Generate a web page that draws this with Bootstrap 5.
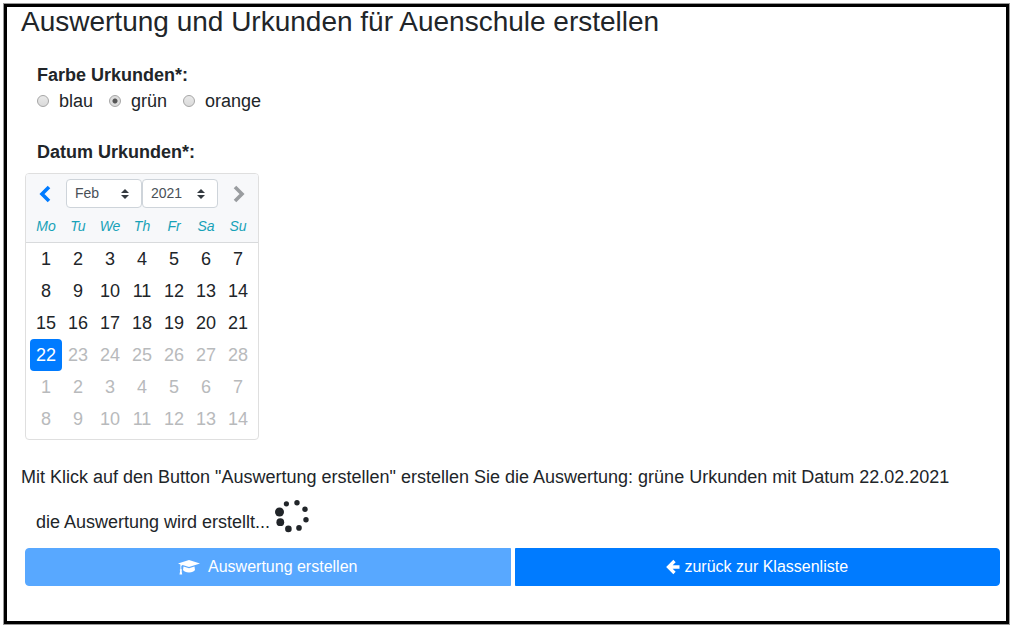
<!DOCTYPE html>
<html lang="de">
<head>
<meta charset="utf-8">
<meta name="viewport" content="width=device-width, initial-scale=1">
<title>Auswertung und Urkunden</title>
<link href="https://cdn.jsdelivr.net/npm/bootstrap@5.3.0/dist/css/bootstrap.min.css" rel="stylesheet">
<style>
body { font: 18px/27px "Liberation Sans", Arial, sans-serif; color: #212529; background: #fff; }
.page-frame { margin: 4px 3px 4px 4px; min-height: calc(100vh - 8px); border: 3px solid #000; outline: 1px solid #999; padding: 0 6px 20px 14px; }
.page-title { font-size: 28px; line-height: 30px; font-weight: 400; margin-bottom: 25px; }
.group-title { font-size: 18px; line-height: 26px; font-weight: 700; }
.date-title { margin-top: 25px; }
.color-choice { gap: 16px; line-height: 26px; }
.color-choice label { gap: 10px; }
.color-choice input { appearance: none; width: 12px; height: 12px; margin: 0; border: 1px solid #a6a6a6; border-radius: 50%; background: linear-gradient(#e9e9e9, #dadada); }
.color-choice input:checked { background: radial-gradient(circle, #555 0 2px, #ddd 3px); }
.picker { width: 234px; border: 1px solid #dfdfdf; border-radius: 4px; overflow: hidden; }
.picker-head { background: #f7f8fa; padding: 5px 4px 2px; }
.picker-nav { width: 32px; height: 29px; color: #007bff; }
.picker-nav:disabled { color: #9a9da0; }
.picker-select { width: 76px; height: 29px; padding: 0 8px; border: 1px solid #ced4da; border-radius: 4px; color: #495057; font-size: 14px; appearance: none; background: #fff url("data:image/svg+xml,%3Csvg xmlns='http://www.w3.org/2000/svg' viewBox='0 0 4 5'%3E%3Cpath fill='%23343a40' d='M2 0L0 2h4zm0 5L0 3h4z'/%3E%3C/svg%3E") no-repeat right 12px center / 8px 10px; }
.picker-table { table-layout: fixed; width: 100%; line-height: 32px; text-align: center; margin-bottom: 4px; }
.picker-table th, .picker-table td { padding: 0; height: 32px; }
.picker-table th { background: #f7f8fa; color: #17a2b8; font-size: 14px; font-weight: 400; font-style: italic; border-bottom: 1px solid #d8dadc; }
.picker-table col.edge { width: 36px; }
.picker-table tr > :first-child { padding-left: 4px; }
.picker-table tr > :last-child { padding-right: 4px; }
.day { display: block; width: 32px; height: 32px; padding: 0; border: 0; border-radius: 4px; background: none; color: #212529; line-height: 32px; }
.day:disabled { color: #b8babc; }
.day.chosen { background: #007bff; color: #fff; }
.summary { margin: 24px 0 7px; }
.progress-note { margin-bottom: 10px; line-height: 31px; padding-left: 15px; }
.actions { gap: 4px; padding-left: 4px; }
.action-btn { --bs-btn-bg: #007bff; --bs-btn-border-color: #007bff; --bs-btn-disabled-bg: #007bff; --bs-btn-disabled-border-color: #007bff; --bs-btn-border-radius: 4px; flex: 1 1 0; font-size: 16px; line-height: 24px; }
</style>
</head>
<body>
<main class="page-frame">
  <h1 class="page-title">Auswertung und Urkunden für Auenschule erstellen</h1>
  <form>
    <fieldset class="px-3">
      <legend class="group-title mb-0">Farbe Urkunden*:</legend>
      <div class="color-choice d-flex">
        <label class="d-flex align-items-center"><input type="radio" name="farbe"><span>blau</span></label>
        <label class="d-flex align-items-center"><input type="radio" name="farbe" checked><span>grün</span></label>
        <label class="d-flex align-items-center"><input type="radio" name="farbe"><span>orange</span></label>
      </div>
    </fieldset>
    <h2 class="group-title date-title px-3 mb-2">Datum Urkunden*:</h2>
    <div class="picker ms-1">
      <div class="picker-head d-flex justify-content-between">
        <button type="button" class="picker-nav btn border-0 p-0 d-flex align-items-center justify-content-center" aria-label="Voriger Monat"><svg width="14" height="18" viewBox="0 0 14 18" fill="none" stroke="currentColor" stroke-width="3.600"><path d="M10 2 3 9l7 7"/></svg></button>
        <div class="d-flex">
          <select class="picker-select" aria-label="Monat"><option>Feb</option></select>
          <select class="picker-select" aria-label="Jahr"><option>2021</option></select>
        </div>
        <button type="button" disabled class="picker-nav btn border-0 p-0 d-flex align-items-center justify-content-center opacity-100" aria-label="Nächster Monat"><svg width="14" height="18" viewBox="0 0 14 18" fill="none" stroke="currentColor" stroke-width="3.600"><path d="m4 2 7 7-7 7"/></svg></button>
      </div>
      <table class="picker-table">
        <colgroup><col class="edge"><col span="5"><col class="edge"></colgroup>
        <thead><tr><th>Mo</th><th>Tu</th><th>We</th><th>Th</th><th>Fr</th><th>Sa</th><th>Su</th></tr></thead>
        <tbody>
          <tr><td><button type="button" class="day">1</button></td><td><button type="button" class="day">2</button></td><td><button type="button" class="day">3</button></td><td><button type="button" class="day">4</button></td><td><button type="button" class="day">5</button></td><td><button type="button" class="day">6</button></td><td><button type="button" class="day">7</button></td></tr>
          <tr><td><button type="button" class="day">8</button></td><td><button type="button" class="day">9</button></td><td><button type="button" class="day">10</button></td><td><button type="button" class="day">11</button></td><td><button type="button" class="day">12</button></td><td><button type="button" class="day">13</button></td><td><button type="button" class="day">14</button></td></tr>
          <tr><td><button type="button" class="day">15</button></td><td><button type="button" class="day">16</button></td><td><button type="button" class="day">17</button></td><td><button type="button" class="day">18</button></td><td><button type="button" class="day">19</button></td><td><button type="button" class="day">20</button></td><td><button type="button" class="day">21</button></td></tr>
          <tr><td><button type="button" class="day chosen">22</button></td><td><button type="button" class="day" disabled>23</button></td><td><button type="button" class="day" disabled>24</button></td><td><button type="button" class="day" disabled>25</button></td><td><button type="button" class="day" disabled>26</button></td><td><button type="button" class="day" disabled>27</button></td><td><button type="button" class="day" disabled>28</button></td></tr>
          <tr><td><button type="button" class="day" disabled>1</button></td><td><button type="button" class="day" disabled>2</button></td><td><button type="button" class="day" disabled>3</button></td><td><button type="button" class="day" disabled>4</button></td><td><button type="button" class="day" disabled>5</button></td><td><button type="button" class="day" disabled>6</button></td><td><button type="button" class="day" disabled>7</button></td></tr>
          <tr><td><button type="button" class="day" disabled>8</button></td><td><button type="button" class="day" disabled>9</button></td><td><button type="button" class="day" disabled>10</button></td><td><button type="button" class="day" disabled>11</button></td><td><button type="button" class="day" disabled>12</button></td><td><button type="button" class="day" disabled>13</button></td><td><button type="button" class="day" disabled>14</button></td></tr>
        </tbody>
      </table>
    </div>
    <p class="summary">Mit Klick auf den Button "Auswertung erstellen" erstellen Sie die Auswertung: grüne Urkunden mit Datum 22.02.2021</p>
    <div class="progress-note d-flex align-items-end" role="status">
      <span>die Auswertung wird erstellt...</span>
      <svg class="ms-1 mb-1" width="36" height="36" viewBox="274 498 36 36" fill="#212529" aria-hidden="true"><circle cx="279.500" cy="512" r="4.500"/><circle cx="280.300" cy="522.200" r="3.900"/><circle cx="288.400" cy="528.900" r="3.300"/><circle cx="299" cy="527.900" r="2.800"/><circle cx="306" cy="519.700" r="2.700"/><circle cx="305" cy="509.200" r="2.700"/><circle cx="297" cy="502.800" r="2.700"/><circle cx="286.400" cy="503.800" r="2.600"/></svg>
    </div>
    <div class="actions d-flex">
      <button type="submit" disabled class="action-btn btn btn-primary rounded-end-0 d-flex align-items-center justify-content-center"><svg class="me-2" width="22" height="16" viewBox="0 0 22 16" fill="#fff" aria-hidden="true"><path d="M11 1 22 4.500 11 8 4.500 6 3.300 7V10l.8 1-.5.8.6 3.700H1.500l.7-3.700-.5-.8.7-1V5.500L0 4.500z"/><path d="m5.500 7.500 5.500 1.700 5.500-1.700.5 3.500c-1 1.600-3 2.500-6 2.500s-5-.9-6-2.500z"/></svg>Auswertung erstellen</button>
      <button type="button" class="action-btn btn btn-primary rounded-start-0 d-flex align-items-center justify-content-center"><svg class="me-1" width="14" height="16" viewBox="0 0 14 16" fill="none" stroke="#fff" stroke-width="3.300" aria-hidden="true"><path d="M8.500 2 2.500 8l6 6M3 8h10.500"/></svg>zurück zur Klassenliste</button>
    </div>
  </form>
</main>
<script src="https://cdn.jsdelivr.net/npm/bootstrap@5.3.0/dist/js/bootstrap.bundle.min.js"></script>
</body>
</html>
